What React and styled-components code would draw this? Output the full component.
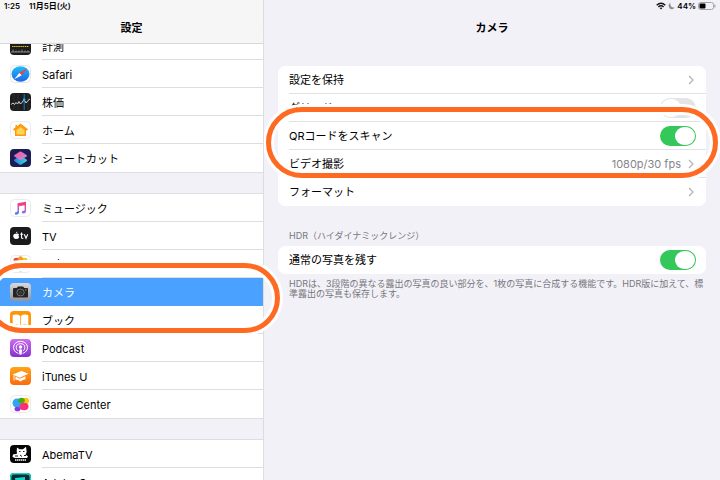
import React from 'react'
import styled, { createGlobalStyle } from 'styled-components'

const GlobalStyle = createGlobalStyle`
  * {
    box-sizing: border-box;
  }
  body {
    margin: 0;
    background: #f2f1f7;
    color: #000;
    font-family: Inter, "Noto Sans CJK JP", sans-serif;
    font-size: 11px;
    line-height: 16px;
  }
`

/* ---------- icons ---------- */

const IconMeasure = () => (
  <Icon viewBox="0 0 21 18">
    <rect width="21" height="18" rx="4" fill="#1c1c1e" />
    <path d="M2 9.500H19" stroke="#e3c21b" strokeWidth="1.200" strokeDasharray="1.500 .6" />
    <path d="M1 15H20M3 12.500V15M6 13.500V15M9 13.500V15M12 12.500V15M15 13.500V15M18 13.500V15" stroke="#b9b9b9" strokeWidth=".7" />
  </Icon>
)

const IconSafari = () => (
  <Icon viewBox="0 0 21 18">
    <defs>
      <linearGradient id="safari" x1="0" y1="0" x2="0" y2="1">
        <stop offset="0" stopColor="#23bdfb" />
        <stop offset="1" stopColor="#1b66e8" />
      </linearGradient>
    </defs>
    <rect x=".5" y=".5" width="20" height="17" rx="4" fill="#fff" stroke="#e6e6e8" />
    <ellipse cx="10.500" cy="9" rx="9" ry="7.700" fill="url(#safari)" />
    <path d="M17 3.500L11.700 10.200L9.300 7.900Z" fill="#ff3b30" />
    <path d="M4 14.500L9.300 7.900L11.700 10.200Z" fill="#fff" />
  </Icon>
)

const IconStocks = () => (
  <Icon viewBox="0 0 21 18">
    <rect width="21" height="18" rx="4" fill="#1d1d20" />
    <path d="M4 1V17M8 1V17M18 1V17" stroke="#3a3a3e" strokeWidth=".6" />
    <path d="M14.200 1V17" stroke="#0a84c8" strokeWidth="1" />
    <path d="M1 11.500L3 10L4.500 11.500L6 9.500L7.500 11L9 8.500L10.500 11L12 9.500L14 6.500L16 10L18 7.500L20 6" fill="none" stroke="#e8e8e8" strokeWidth=".9" />
    <circle cx="14.200" cy="6.500" r="1.200" fill="#14a5f0" />
  </Icon>
)

const IconHome = () => (
  <Icon viewBox="0 0 21 18">
    <rect x=".5" y=".5" width="20" height="17" rx="4" fill="#fff" stroke="#ebebed" />
    <path d="M10.500 2.500L18 8.300L17 9.500H16V15H5V9.500H4L3 8.300L5.500 6.300V4H7V5.200Z" fill="#fd9a0d" />
    <path d="M10.500 6L14.500 9V13.500H6.500V9Z" fill="#ffd35a" />
  </Icon>
)

const IconShortcuts = () => (
  <Icon viewBox="0 0 21 18">
    <defs>
      <linearGradient id="scTop" x1="0" y1="0" x2="1" y2="1">
        <stop offset="0" stopColor="#f5568d" />
        <stop offset="1" stopColor="#c58be8" />
      </linearGradient>
      <linearGradient id="scBottom" x1="0" y1="0" x2="1" y2="0">
        <stop offset="0" stopColor="#2f7bf0" />
        <stop offset="1" stopColor="#34dbc0" />
      </linearGradient>
    </defs>
    <rect width="21" height="18" rx="4" fill="#1b1c54" />
    <path d="M10.500 6.500L16.500 10.500Q17.500 11.400 16.500 12.200L11.500 15.400Q10.500 16 9.500 15.400L4.500 12.200Q3.500 11.400 4.500 10.500Z" fill="url(#scBottom)" />
    <path d="M9.500 2.700Q10.500 2.100 11.500 2.700L16.500 5.900Q17.500 6.700 16.500 7.500L11.500 10.800Q10.500 11.400 9.500 10.800L4.500 7.500Q3.500 6.700 4.500 5.900Z" fill="url(#scTop)" />
  </Icon>
)

const IconMusic = () => (
  <Icon viewBox="0 0 21 18">
    <defs>
      <linearGradient id="music" x1=".6" y1="0" x2=".4" y2="1">
        <stop offset="0" stopColor="#fb3c5c" />
        <stop offset=".5" stopColor="#d54fc5" />
        <stop offset="1" stopColor="#3c8cf6" />
      </linearGradient>
    </defs>
    <rect x=".5" y=".5" width="20" height="17" rx="4" fill="#fff" stroke="#ebebed" />
    <path d="M7.500 4.200L16 2.700V12.300Q16 14.300 13.700 14.600Q11.700 14.700 11.800 13.100Q12 11.800 14.600 11.400V6.200L9 7.200V13.600Q9 15.600 6.600 15.800Q4.600 15.900 4.700 14.400Q4.900 13 7.500 12.600Z" fill="url(#music)" />
  </Icon>
)

const IconTv = () => (
  <Icon viewBox="0 0 21 18">
    <rect width="21" height="18" rx="4" fill="#1b1b1d" />
    <path d="M6 6.700Q8 6 9 7.300Q7.700 8.500 9.200 10Q8.200 12.500 6 11.800Q4 12.400 3.200 9.500Q3.200 6.200 6 6.700ZM6 6.200Q6 4.800 7.500 4.500Q7.500 6 6 6.200Z" fill="#fff" />
    <path d="M11.500 5.500V10.500Q11.500 11.600 13.300 11.300M10.300 7.200H13.200M14.300 7.200L16 11.300L17.700 7.200" fill="none" stroke="#fff" strokeWidth="1.100" />
  </Icon>
)

const IconPhotos = () => (
  <Icon viewBox="0 0 21 18">
    <rect x=".5" y=".5" width="20" height="17" rx="4" fill="#fff" stroke="#ebebed" />
    <ellipse cx="14.500" cy="5" rx="3" ry="2.200" fill="#e8cf27" />
    <ellipse cx="6.500" cy="5" rx="3" ry="2.200" fill="#ef4b3b" />
    <ellipse cx="10.500" cy="4.200" rx="2.400" ry="3" fill="#f79a1e" />
    <ellipse cx="16" cy="9" rx="3" ry="2" fill="#9cc93c" />
    <ellipse cx="5" cy="9" rx="3" ry="2" fill="#b57bd0" />
    <ellipse cx="14.500" cy="12.500" rx="2.500" ry="2.200" fill="#5cbf8b" />
    <ellipse cx="6.500" cy="12.500" rx="2.500" ry="2.200" fill="#7e82dc" />
    <ellipse cx="10.500" cy="13.500" rx="2.200" ry="3" fill="#4aa3e6" />
  </Icon>
)

const IconCamera = () => (
  <Icon viewBox="0 0 21 18">
    <defs>
      <linearGradient id="camera" x1="0" y1="0" x2="0" y2="1">
        <stop offset="0" stopColor="#dadadd" />
        <stop offset="1" stopColor="#939399" />
      </linearGradient>
    </defs>
    <rect width="21" height="18" rx="4" fill="url(#camera)" />
    <path d="M4 5H6.700L8 3.500H13L14.300 5H17Q18 5 18 6V13.500Q18 14.500 17 14.500H4Q3 14.500 3 13.500V6Q3 5 4 5Z" fill="#252527" />
    <ellipse cx="10.500" cy="9.500" rx="3.700" ry="3.400" fill="none" stroke="#8a8a8d" strokeWidth=".8" />
    <ellipse cx="10.500" cy="9.500" rx="2" ry="1.800" fill="#3c3c3e" />
    <circle cx="15.800" cy="6.800" r=".6" fill="#f0c030" />
  </Icon>
)

const IconBooks = () => (
  <Icon viewBox="0 0 21 18">
    <rect width="21" height="18" rx="4" fill="#ff9406" />
    <path d="M10.200 5Q7 2.500 2.700 4.200V14Q7 12.500 10.200 14.700ZM10.900 5Q14 2.500 18.300 4.200V14Q14 12.500 10.900 14.700Z" fill="#fff" />
  </Icon>
)

const IconPodcast = () => (
  <Icon viewBox="0 0 21 18">
    <defs>
      <linearGradient id="podcast" x1="0" y1="0" x2="0" y2="1">
        <stop offset="0" stopColor="#cf6cf0" />
        <stop offset="1" stopColor="#8430d0" />
      </linearGradient>
    </defs>
    <rect width="21" height="18" rx="4" fill="url(#podcast)" />
    <ellipse cx="10.500" cy="8.500" rx="7" ry="6.200" fill="none" stroke="#fff" strokeWidth="1" />
    <ellipse cx="10.500" cy="8.500" rx="4.300" ry="3.800" fill="none" stroke="#fff" strokeWidth="1" />
    <path d="M8 11H13L12.500 16H8.500Z" fill="#a346dc" />
    <circle cx="10.500" cy="8" r="1.700" fill="#fff" />
    <path d="M8.800 10.700Q10.500 9.700 12.200 10.700L11.600 15.300Q10.500 16.200 9.400 15.300Z" fill="#fff" />
  </Icon>
)

const IconItunesU = () => (
  <Icon viewBox="0 0 21 18">
    <defs>
      <linearGradient id="itunesu" x1="0" y1="0" x2="0" y2="1">
        <stop offset="0" stopColor="#ffa41b" />
        <stop offset="1" stopColor="#fb6d0c" />
      </linearGradient>
    </defs>
    <rect width="21" height="18" rx="4" fill="url(#itunesu)" />
    <path d="M2.500 7.500L11.500 4L18.500 6.700L9.700 10.700Z" fill="#fff" />
    <path d="M5.500 9.600L9.700 11.700L15.500 9.200V12.200Q12.500 12.500 10.500 14.500Q8.500 12.400 5.500 12.700Z" fill="#fff" />
    <path d="M4 8.300V13.500" stroke="#fff" strokeWidth=".9" />
  </Icon>
)

const IconGameCenter = () => (
  <Icon viewBox="0 0 21 18">
    <rect x=".5" y=".5" width="20" height="17" rx="4" fill="#fff" stroke="#ebebed" />
    <ellipse cx="15.500" cy="6" rx="3.500" ry="3.200" fill="#ffc70a" />
    <ellipse cx="7" cy="8" rx="4.500" ry="4.500" fill="#2aa6f3" />
    <ellipse cx="11.500" cy="5.500" rx="3.300" ry="2.700" fill="#44a91c" />
    <ellipse cx="14" cy="11.500" rx="4.500" ry="3.700" fill="#fb2f78" />
    <ellipse cx="7.500" cy="14" rx="3" ry="2.300" fill="#8b35e0" />
  </Icon>
)

const IconAbema = () => (
  <Icon viewBox="0 0 21 18">
    <rect width="21" height="18" rx="4" fill="#050505" />
    <path d="M7 2.500L9.500 4.200H13L16 1.800L16.700 7L15.500 9.500L18 11.500L17 13H5L2.500 12L3 9.500L7 8.800L6.700 6Z" fill="#fff" />
    <path d="M9 6.500H10.500M13 6.500H14.500M5 11H8M10 10L12 11.500M14 10.500H16" stroke="#050505" strokeWidth=".9" />
    <path d="M5 15H16" stroke="#fff" strokeWidth="1.300" strokeDasharray="1.500 .5" />
  </Icon>
)

const IconAdobe = () => (
  <Icon viewBox="0 0 21 18">
    <rect width="21" height="18" rx="4" fill="#062b2e" />
    <rect x=".7" y=".7" width="19.600" height="16.600" rx="3.500" fill="none" stroke="#12d6cf" strokeWidth="1.400" />
    <path d="M5 5L15 4V13H6Z" fill="#12d6cf" />
  </Icon>
)

const Chevron = () => (
  <ChevronSvg viewBox="0 0 6 10">
    <path d="M1 1L5 5L1 9" fill="none" stroke="#b6b6ba" strokeWidth="1.300" />
  </ChevronSvg>
)

/* ---------- data ---------- */

const groups = [
  [
    { name: '計測', icon: IconMeasure },
    { name: 'Safari', icon: IconSafari },
    { name: '株価', icon: IconStocks },
    { name: 'ホーム', icon: IconHome },
    { name: 'ショートカット', icon: IconShortcuts },
  ],
  [
    { name: 'ミュージック', icon: IconMusic },
    { name: 'TV', icon: IconTv },
    { name: '写真', icon: IconPhotos },
    { name: 'カメラ', icon: IconCamera, active: true },
    { name: 'ブック', icon: IconBooks },
    { name: 'Podcast', icon: IconPodcast },
    { name: 'iTunes U', icon: IconItunesU },
    { name: 'Game Center', icon: IconGameCenter },
  ],
  [
    { name: 'AbemaTV', icon: IconAbema },
    { name: 'Adobe Scan', icon: IconAdobe },
  ],
]

const App = () => {
  return (
    <>
      <GlobalStyle />
      <Page>
        <Sidebar>
          <SideHeader>
            <StatusBar>
              <span>1:25</span>
              <span>11月5日(火)</span>
            </StatusBar>
            <Title>設定</Title>
          </SideHeader>
          <Groups>
            {groups.map((group, i) => (
              <Group key={i}>
                {group.map(({ name, icon: AppIcon, active }) => (
                  <AppRow key={name} href="#" $active={active}>
                    <AppIcon />
                    <AppName $active={active}>{name}</AppName>
                    {active && <RowRing />}
                  </AppRow>
                ))}
              </Group>
            ))}
          </Groups>
        </Sidebar>

        <Detail>
          <DetailHeader>
            <StatusBar $end>
              <svg width="10" height="8" viewBox="0 0 10 8">
                <path d="M.7 3.200Q5-.8 9.300 3.200M2.400 4.900Q5 2.600 7.600 4.900" fill="none" stroke="#111" strokeWidth="1.400" />
                <path d="M3.600 6L5 7.500L6.400 6Q5 5 3.600 6Z" fill="#111" />
              </svg>
              <svg width="7" height="8" viewBox="0 0 7 8">
                <path d="M2.300 .8Q.2 2 .6 4.500Q1.300 7.200 4 7.200Q5.800 7.200 6.600 5.500Q2 6 2.300 .8Z" fill="#8e8e93" />
              </svg>
              <span>44%</span>
              <svg width="18" height="8" viewBox="0 0 18 8">
                <rect x=".5" y=".5" width="15" height="7" rx="2" fill="none" stroke="#a5a5a9" />
                <rect x="1.500" y="1.500" width="6" height="5" rx="1" fill="#000" />
                <path d="M16.800 2.500V5.500" stroke="#a5a5a9" strokeWidth="1.200" />
              </svg>
            </StatusBar>
            <Title>カメラ</Title>
          </DetailHeader>

          <Card>
            <LinkRow href="#">
              設定を保持
              <Chevron />
            </LinkRow>
            <SwitchRow>
              グリッド
              <Switch />
            </SwitchRow>
            <SwitchRow>
              QRコードをスキャン
              <Switch defaultChecked />
            </SwitchRow>
            <LinkRow href="#">
              ビデオ撮影
              <Value>1080p/30 fps</Value>
              <Chevron />
            </LinkRow>
            <LinkRow href="#">
              フォーマット
              <Chevron />
            </LinkRow>
            <CardRing />
          </Card>

          <Caption>HDR（ハイダイナミックレンジ）</Caption>
          <Card>
            <SwitchRow>
              通常の写真を残す
              <Switch defaultChecked />
            </SwitchRow>
          </Card>
          <Note>
            HDRは、3段階の異なる露出の写真の良い部分を、1枚の写真に合成する機能です。HDR版に加えて、標準露出の写真も保存します。
          </Note>
        </Detail>
      </Page>
    </>
  )
}

export default App

/* ---------- styles ---------- */

const Page = styled.div`
  display: flex;
  height: 100vh;
  overflow: hidden;
`

const Sidebar = styled.aside`
  position: relative;
  z-index: 1;
  flex: 0 0 264px;
  border-right: 1px solid #dcdce0;
`

const SideHeader = styled.header`
  position: relative;
  z-index: 1;
  height: 44px;
  background: #f6f6f6;
  border-bottom: 1px solid #d9d9d9;
`

const StatusBar = styled.div`
  display: flex;
  align-items: center;
  justify-content: ${({ $end }) => ($end ? 'flex-end' : 'flex-start')};
  gap: ${({ $end }) => ($end ? '2px' : '9px')};
  height: 12px;
  padding: 0 4px;
  font-size: 8px;
  font-weight: 600;
  line-height: 12px;
`

const Title = styled.h1`
  margin: 8px 0 0;
  font-size: 11px;
  font-weight: 700;
  line-height: 16px;
  text-align: center;
`

/* the list is scrolled a little under the header */
const Groups = styled.nav`
  display: flex;
  flex-direction: column;
  gap: 22px;
  margin-top: -12px;
`

const Group = styled.div`
  background: #fff;
  box-shadow: 0 0 0 1px #dedee2;
`

const AppRow = styled.a`
  position: relative;
  z-index: ${({ $active }) => ($active ? 1 : 'auto')};
  display: flex;
  align-items: center;
  gap: 11px;
  height: 28px;
  padding-left: 10px;
  background: ${({ $active }) => ($active ? '#4ba1ff' : 'transparent')};
  color: ${({ $active }) => ($active ? '#fff' : '#000')};
  text-decoration: none;
`

const AppName = styled.span`
  flex: 1;
  padding-top: 3px;
  line-height: 24px;
  border-bottom: 1px solid ${({ $active }) => ($active ? 'transparent' : '#dddddf')};

  ${AppRow}:last-child & {
    border-color: transparent;
  }
`

const Icon = styled.svg`
  flex: none;
  width: 21px;
  height: 18px;
`

const Ring = styled.span`
  position: absolute;
  border: 5px solid #ff6a22;
  border-radius: 36px;
  box-shadow: 0 0 0 3px #fff, inset 0 0 0 3px #fff;
  pointer-events: none;
`

const RowRing = styled(Ring)`
  top: -15px;
  right: -17px;
  bottom: -27px;
  left: -14px;
`

const CardRing = styled(Ring)`
  top: 41px;
  right: -12px;
  left: -12px;
  height: 71px;
`

const Detail = styled.main`
  flex: 1;
  min-width: 0;
`

const DetailHeader = styled.header`
  height: 66px;
`

const Card = styled.section`
  position: relative;
  margin: 0 14px;
  border-radius: 7px;
  background: #fff;
`

const LinkRow = styled.a`
  display: flex;
  align-items: center;
  height: 28px;
  margin-left: 11px;
  padding: 1px 12px 0 0;
  border-bottom: 1px solid #e2e2e4;
  color: #000;
  text-decoration: none;

  &:nth-last-child(2) {
    border-color: transparent;
  }
`

const SwitchRow = styled.label`
  display: flex;
  align-items: center;
  justify-content: space-between;
  height: 28px;
  margin-left: 11px;
  padding: 1px 10px 0 0;
  border-bottom: 1px solid #e2e2e4;

  &:last-child {
    border-color: transparent;
  }
`

const Switch = styled.input.attrs({ type: 'checkbox' })`
  appearance: none;
  display: flex;
  align-items: center;
  width: 36px;
  height: 20px;
  margin: 0;
  padding: 0 1px;
  border-radius: 10px;
  background: #e4e4e6;

  &::before {
    content: '';
    width: 20px;
    height: 18px;
    border-radius: 9px;
    background: #fff;
  }

  &:checked {
    justify-content: flex-end;
    background: #34c759;
  }
`

const Value = styled.span`
  margin-left: auto;
  color: #85858a;

  & + svg {
    margin-left: 7px;
  }
`

const ChevronSvg = styled.svg`
  width: 6px;
  height: 10px;
  margin-left: auto;
`

const Caption = styled.h2`
  margin: 24px 25px 4px;
  color: #77777c;
  font-size: 9px;
  font-weight: 400;
  line-height: 12px;
`

const Note = styled.p`
  margin: 5px 14px 0 25px;
  color: #77777c;
  font-size: 9px;
  line-height: 10px;
`
